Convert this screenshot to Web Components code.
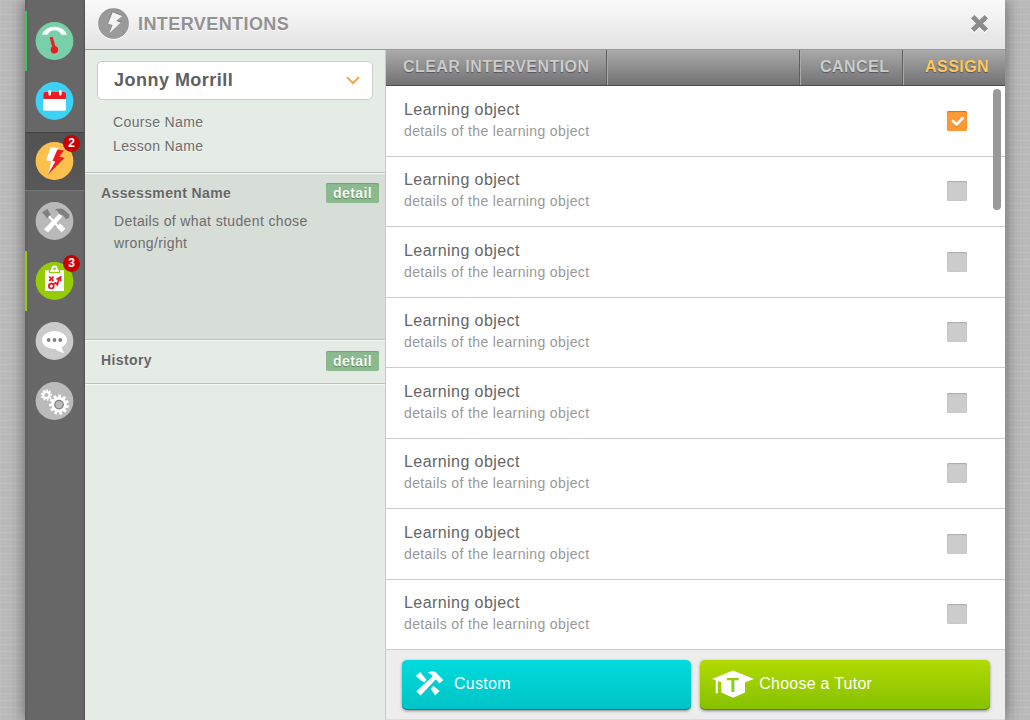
<!DOCTYPE html>
<html lang="en">
<head>
<meta charset="utf-8">
<title>Interventions</title>
<style>
html,body{margin:0;height:100%;overflow:hidden;background:#bbb}
body{font-family:"Liberation Sans",Arial,sans-serif}
</style>
</head>
<body>
<interventions-app></interventions-app>
<script>
const define = (name, html) => customElements.define(name, class extends HTMLElement {
  constructor() {
    super();
    this.attachShadow({ mode: 'open' });
  }
  connectedCallback() {
    const t = document.createElement('template');
    t.innerHTML = `<style>*{box-sizing:border-box}:host{display:block;box-sizing:border-box}</style>` + (typeof html === 'function' ? html(this) : html);
    this.shadowRoot.replaceChildren(t.content.cloneNode(true));
  }
});

const gear = (cx, cy, r, depth, n, w, hole) => {
  let s = '';
  for (let i = 0; i < n; i++) s += `<rect x="${cx - w / 2}" y="${cy - r}" width="${w}" height="${depth + 1}" transform="rotate(${i * 360 / n + 5} ${cx} ${cy})"/>`;
  return `<g fill="#fff">${s}</g><circle cx="${cx}" cy="${cy}" r="${(r - depth + hole) / 2}" fill="none" stroke="#fff" stroke-width="${r - depth - hole}"/>`;
};

const icons = {
  gauge: ['#79cfa9', `<path fill="#fff" d="M7.5 13.7C11 3 29 3 32.5 13.7H27.3C23 7.9 17 7.9 12.8 13.7Z"/><path fill="#ed1c24" d="M15.2 16.4L18.2 15.8 21.3 27H18Z"/><circle cx="19.9" cy="28.7" r="3.7" fill="#ed1c24"/>`],
  calendar: ['#3bd2f4', `<rect x="8.8" y="11" width="22.7" height="18.8" rx="1.5" fill="#fff"/><path fill="#ed1c24" d="M8.8 18V12.5Q8.8 11 10.3 11H30Q31.5 11 31.5 12.5V18Z"/><path stroke="#fff" stroke-width="2.6" stroke-linecap="round" d="M15.2 10.2V13.2M25.8 10.2V13.2"/>`],
  bolt: ['#fdc04c', `<path fill="#fff" d="M16.2 6L23.8 7.3 22 14 25 16 13.2 33.6 17 20.6 11.6 19.3Z"/><path fill="#ed1c24" d="M22.9 8.6L29.5 9.6 24.8 15.7 30.2 16.7 13.2 34 20.8 20.6 18 19.7Z"/>`],
  tools: ['#b9b9b9', `<path fill="#808080" d="M7.7 11.5L12.8 7.8 16.2 13.8 12.6 17.4 10.6 14.8Z"/><path stroke="#fff" stroke-width="2.2" d="M14.5 15.3L24 26"/><path fill="#fff" d="M22 26L25.8 22.4 31 27.6 27.2 31.4Z"/><path fill="#808080" d="M20.3 8.9C24.5 6.4 29 7.2 31.8 10.8L34.9 13.6 34.7 16.8 31.6 18.2 28.4 14.2 24.6 13.3C24.5 10.8 22.8 9.4 20.3 8.9Z"/><path fill="#fff" d="M24.7 12.8L27.7 15.4 13.6 31.6 9.4 28.2Z"/>`],
  plan: ['#96cb08', `<path fill="#fff" d="M10.5 9.3H29.5V30H10.5Z"/><path d="M14.3 12.2V9H25.7V12.2Z" fill="#96cb08"/><path d="M15.5 11V9.3Q17 9.2 17 7.6A3 3 0 0 1 23 7.6Q23 9.2 24.5 9.3V11Z" fill="#fff"/><circle cx="20" cy="7.8" r="1.4" fill="#96cb08"/><g fill="none" stroke="#ed1c24" stroke-width="1.8"><path d="M14.7 15.7L19 20M19 15.7L14.7 20"/><circle cx="16.8" cy="25" r="2.4"/><path d="M18.7 23.3L21.2 21.8 22.8 23.7 24.5 17.8"/></g><path fill="#ed1c24" d="M27 14.5L26.9 20.5 21 18Z"/>`],
  chat: ['#cbcbcb', `<ellipse cx="20" cy="19" rx="12.5" ry="9" fill="#fff"/><path fill="#fff" d="M20 27Q23 31 29.8 32Q27.3 28.5 27 25Z"/><g fill="#808080"><circle cx="14.2" cy="19" r="1.9"/><circle cx="20" cy="19" r="1.9"/><circle cx="25.8" cy="19" r="1.9"/></g>`],
  gears: ['#bababa', `<circle cx="24.5" cy="23.6" r="6" fill="#808080"/><circle cx="24.5" cy="23.6" r="3.6" fill="#bababa"/>${gear(11.9, 14, 5.6, 1.6, 9, 1.9, 2.1)}${gear(24.5, 23.6, 10, 2.3, 11, 2.8, 4.9)}`]
};

define('round-icon', el => {
  const [bg, art] = icons[el.getAttribute('name')];
  return `<style>:host{width:40px;height:40px}svg{display:block}</style><svg width="40" height="40" viewBox="0 0 40 40"><g transform="translate(-.5 0)"><circle cx="20" cy="20" r="18.9" fill="${bg}"/>${art}</g></svg>`;
});

define('nav-item', el => `<style>
:host{position:relative;height:60px;padding:10px 0 0 7.5px;border-left:2px solid var(--bar,transparent)}
:host([active]){background:linear-gradient(transparent 1px,#424242 1px,#424242 2px,#525252 2px,#585858 59px,#777 59px)}
b{position:absolute;left:36px;top:3.5px;width:17px;height:17px;border-radius:50%;background:#c80000;color:#fff;font-size:12px;line-height:17px;text-align:center}
</style><round-icon name="${el.getAttribute('icon')}"></round-icon>${el.hasAttribute('count') ? `<b>${el.getAttribute('count')}</b>` : ''}`);

define('side-nav', `<style>:host{width:60px;height:720px;padding-top:11px;border-right:1px solid #555;background:linear-gradient(90deg,#606060,#676767 4px,#676767 56px,#626262)}</style>
<nav-item icon="gauge" style="--bar:#2ecc57"></nav-item><nav-item icon="calendar"></nav-item><nav-item icon="bolt" count="2" active></nav-item><nav-item icon="tools"></nav-item><nav-item icon="plan" count="3" style="--bar:#96cb08"></nav-item><nav-item icon="chat"></nav-item><nav-item icon="gears"></nav-item>`);

define('title-bar', `<style>
:host{display:flex;height:50px;align-items:center;padding:0 16px 2px 13px;background:linear-gradient(#fafafa,#e3e3e3);border-bottom:1px solid #999;color:#929292}
h1{margin:0 auto 0 9px;font-size:18px;line-height:20px;letter-spacing:.42px;text-shadow:0 1px #fff}
svg{display:block;filter:drop-shadow(0 1px 0 #fff)}
</style>
<svg width="31" height="31" viewBox="0 0 31 31"><circle cx="15.5" cy="15.5" r="15.3" fill="#8c8c8c"/><circle cx="15.5" cy="15.9" r="14.6" fill="#9a9a9a"/><path fill="#7c7c7c" d="M14 3.2L24.8 7.2 19.6 12.5 23.8 13.6 11 26.2 14 17 9.2 16Z"/><path fill="#f3f3f3" d="M14.6 4.2L24.3 8 18.2 13.1 22.8 14.4 11.3 25.5 14.6 17 10 15.8Z"/></svg>
<h1>INTERVENTIONS</h1>
<svg width="19" height="19" viewBox="0 0 19 19"><path d="M2.7 2.7L16.3 16.3M16.3 2.7L2.7 16.3" stroke="#8c8c8c" stroke-width="4.9"/></svg>`);

define('detail-button', `<style>:host{width:53px;height:20px;border-radius:2px;background:#8cba8f;box-shadow:inset 0 1px 1px #769f79;color:#f6fbf6;font:bold 14px/21px "Liberation Sans",sans-serif;letter-spacing:.4px;text-align:center;text-shadow:0 1px 1px #5d8360}</style><slot></slot>`);

define('student-select', `<style>:host{display:flex;align-items:center;justify-content:space-between;height:39px;margin:11px 12px 0 12px;padding:0 12px 0 16px;background:#fff;border:1px solid #ccc;border-radius:5px;font-size:18px;font-weight:bold;letter-spacing:.48px;color:#606060}svg{display:block}</style><slot></slot><svg width="14" height="9" viewBox="0 0 14 9"><path d="M1 1.2L7 7.2 13 1.2" fill="none" stroke="#ff9933" stroke-width="1.8"/></svg>`);

define('info-section', `<style>
:host{border-bottom:1px solid #bcc4bc;box-shadow:inset 0 1px #f4f8f4}
header{display:flex;justify-content:space-between;padding:10px 6px 0 16px}
h2{margin:0;font-size:14px;line-height:20px;letter-spacing:.38px;color:#666;text-shadow:0 1px #f3f6f3}
p{margin:7px 60px 0 29px;font-size:14px;line-height:22px;letter-spacing:.37px}
detail-button{margin-top:var(--drop,0)}
</style><header><h2><slot name="title"></slot></h2><detail-button>detail</detail-button></header><p><slot></slot></p>`);

define('student-panel', `<style>
:host{width:301px;background:#e5ece5;border-right:1px solid #c5cbc5;color:#6c6c6c}
.who{height:123px;border-bottom:1px solid #bcc4bc;display:flow-root}
.meta{margin:10px 28px;font-size:14px;line-height:24px;letter-spacing:.37px;text-shadow:0 1px #f5f8f5}
.assess{height:167px;background:#d7ddd7}.hist{height:44px;--drop:1px}.end{height:1px;background:#f5f8f5}
</style><div class="who"><student-select>Jonny Morrill</student-select><div class="meta">Course Name<br>Lesson Name</div></div>
<info-section class="assess"><span slot="title">Assessment Name</span>Details of what student chose wrong/right</info-section>
<info-section class="hist"><span slot="title">History</span></info-section><div class="end"></div>`);

define('action-bar', `<style>
:host{display:flex;height:36px;background:linear-gradient(#aaa,#727274);border-bottom:1px solid #4c4c4c;font:bold 16px/33px "Liberation Sans",sans-serif;letter-spacing:.45px;color:#ccc;text-shadow:0 1px 1px #555}
span{padding-left:17px;border-right:1px solid #5f5f5f;box-shadow:1px 0 #aaa}
.clear{width:221px}.gap{width:193px}.cancel{width:103px;padding-left:20px}.assign{border:0;box-shadow:none;color:#ffc85c;padding-left:22px}
</style><span class="clear">CLEAR INTERVENTION</span><span class="gap"></span><span class="cancel">CANCEL</span><span class="assign">ASSIGN</span>`);

define('check-box', el => `<style>:host{width:20px;height:20px;border-radius:2px;background:${el.hasAttribute('checked') ? '#ff9933' : '#ccc'};box-shadow:inset 0 1px 1px ${el.hasAttribute('checked') ? '#c97423' : '#aaa'},inset 0 0 1px ${el.hasAttribute('checked') ? '#d98028' : '#aaa'}}svg{display:block}</style>${el.hasAttribute('checked') ? '<svg width="20" height="20"><path d="M5.9 10.8L9.6 14.3 15.7 7.9" fill="none" stroke="#b86b20" stroke-width="2.8" stroke-linecap="round" opacity=".5"/><path d="M5.9 10L9.6 13.5 15.7 7.2" fill="none" stroke="#fff" stroke-width="2.8" stroke-linecap="round" stroke-linejoin="round"/></svg>' : ''}`);

define('object-row', el => `<style>
:host{display:flex;justify-content:space-between;border-bottom:1px solid #ccc;padding:13.4px 38px 0 18px}
h3{margin:0;font-size:16px;font-weight:normal;line-height:20px;letter-spacing:.43px;color:#666}
p{margin:1px 0 0;font-size:14px;line-height:20px;letter-spacing:.37px;color:#999}
check-box{margin-top:11px}
</style><div><h3>Learning object</h3><p>details of the learning object</p></div><check-box ${el.hasAttribute('checked') ? 'checked' : ''}></check-box>`);

define('object-list', `<style>:host{position:relative;height:564px;padding-top:.6px;display:grid;grid-template-rows:repeat(8,70.43px);background:#fff}i{position:absolute;right:3.6px;top:2.5px;width:8px;height:121px;border-radius:4px;background:#999}</style><object-row checked></object-row>${'<object-row></object-row>'.repeat(7)}<i></i>`);

define('big-button', `<style>
:host{display:flex;align-items:center;height:50px;border-radius:5px;color:#fff;font-size:16px;letter-spacing:.3px;background:linear-gradient(var(--a),var(--b));box-shadow:inset 0 -1px var(--c),0 1px 3px #888;padding:0 0 2px 11px}
::slotted(svg){display:block;margin-right:var(--gap)}
</style><slot></slot>`);

define('footer-actions', `<style>:host{display:grid;grid-template-columns:1fr 1fr;column-gap:9px;height:70px;padding:10px 15px 0 15.5px;background:#ededed;border-bottom:1px solid #ddd}
.custom{--a:#00dbdc;--b:#00c3c6;--c:#008b8e;--gap:10px}.tutor{--a:#b1da00;--b:#86c100;--c:#5e8700;--gap:5.5px;letter-spacing:.25px;padding-left:11.5px}</style>
<big-button class="custom" style="padding-left:13.5px"><svg width="29" height="26" viewBox="0 0 29 26" fill="#fff"><path d="M.7 4.8L5.2.9 8.8 5.6 11.5 9 9.3 11.4 5.5 9.3Z"/><path d="M15.8 17.7L18.5 14.7 24.6 20 20.2 24.5Z"/><path d="M12.7 2C17-1 21 .3 23.8 4.6L28.4 9 24.4 12.5 21.3 8.7 20.2 8.9 5.6 24.5 1.3 20.3 17.4 5.8C16.8 3.3 15.2 2 12.7 2Z"/></svg>Custom</big-button>
<big-button class="tutor"><svg width="42" height="28" viewBox="0 0 42 28"><path fill="#fff" d="M0 8.9L21 .4 42 8.9 33 12.2V22.5L21 27.7 9.3 22.5V12.3L5.8 11V23.2H3.7V10.1Z"/><text x="21" y="22.3" text-anchor="middle" font-family="Liberation Sans" font-weight="bold" font-size="20" fill="#98cc00">T</text></svg>Choose a Tutor</big-button>`);

define('interventions-app', `<style>
:host{height:720px;background:repeating-linear-gradient(90deg,#fff1 0 1px,transparent 1px 5px),repeating-linear-gradient(#fff1 0 1px,transparent 1px 7px),#bababa;display:flex;justify-content:center}
.window{width:980px;height:720px;display:flex;box-shadow:0 0 15px 1px #444a}
main{flex:1;min-width:0}.cols{display:flex;height:670px}.right{flex:1;min-width:0}
</style><div class="window"><side-nav></side-nav><main><title-bar></title-bar><div class="cols"><student-panel></student-panel><div class="right"><action-bar></action-bar><object-list></object-list><footer-actions></footer-actions></div></div></main></div>`);
</script>
</body>
</html>
